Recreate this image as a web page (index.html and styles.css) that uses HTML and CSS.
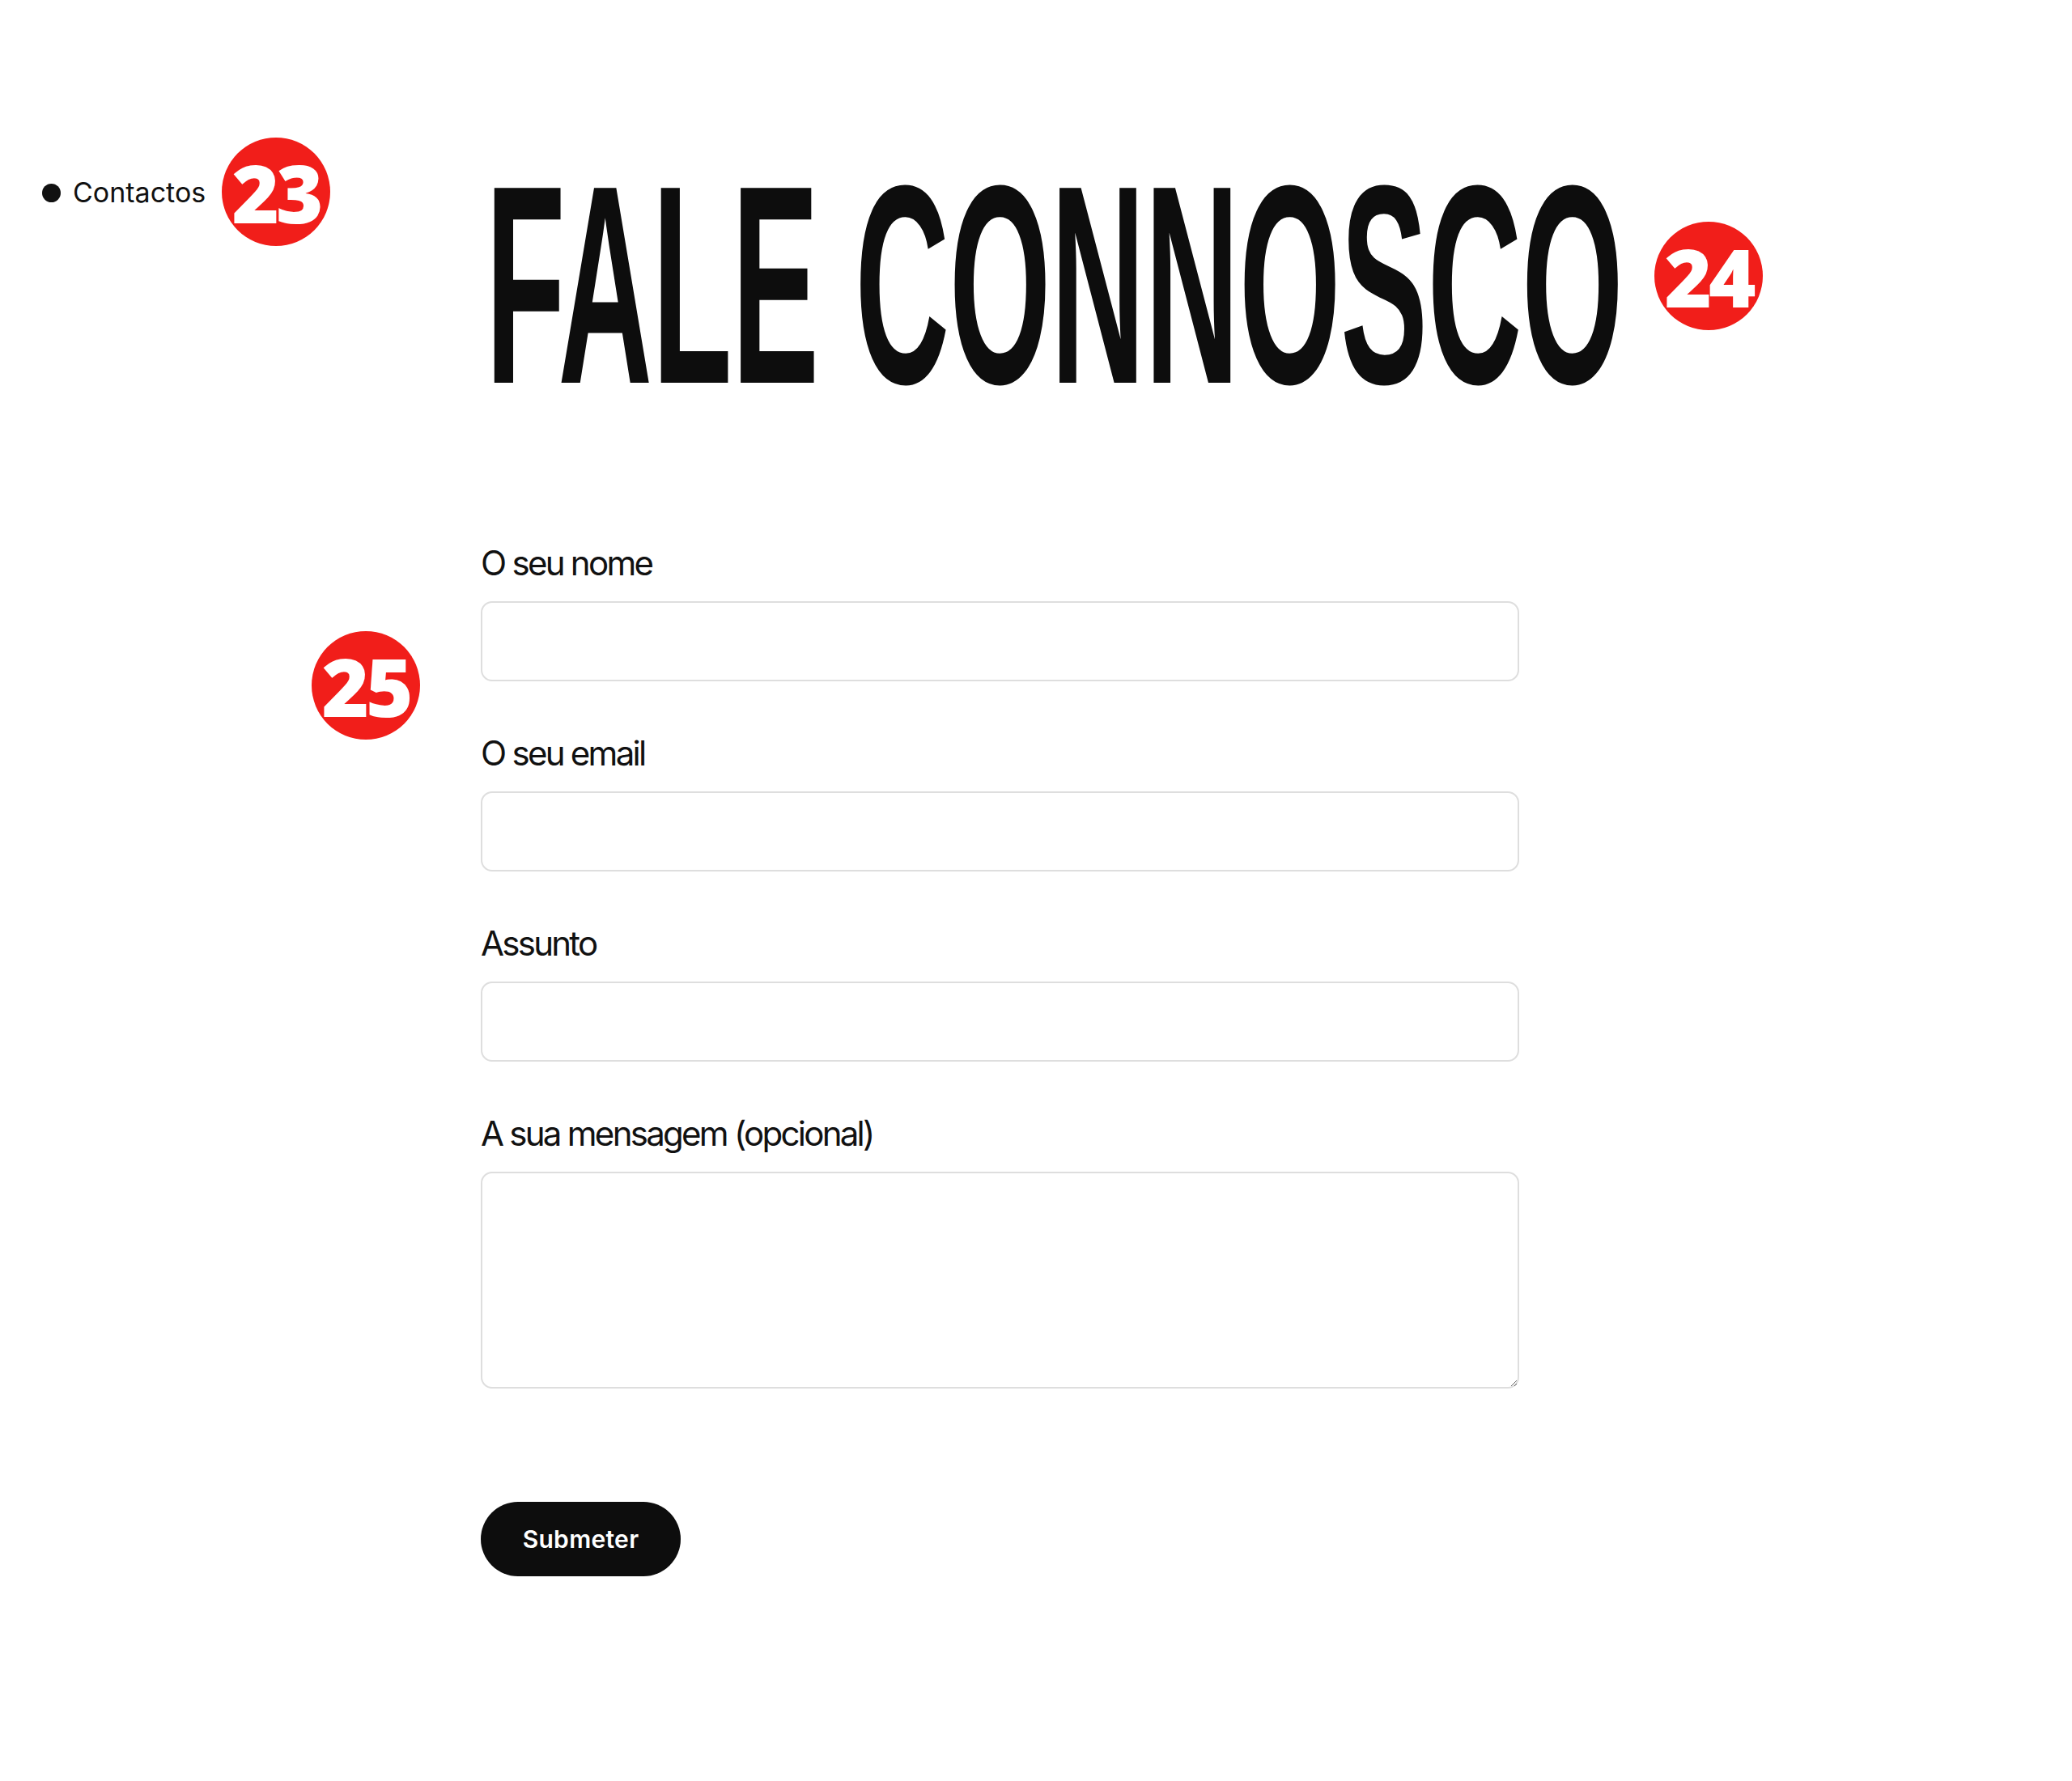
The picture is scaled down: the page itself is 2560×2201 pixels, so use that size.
FILE: index.html
```html
<!DOCTYPE html>
<html lang="pt">
<head>
<meta charset="utf-8">
<title>Fale connosco</title>
<link rel="stylesheet" href="styles.css">
</head>
<body>
<main class="page">
  <aside class="side">
    <span class="dot"></span>
    <span class="side-label">Contactos</span>
  </aside>
  <section class="content">
    <h1 class="title"><span class="title-text">FALE CONNOSCO</span></h1>
    <form class="form">
      <div class="field">
        <label class="label" for="nome">O seu nome</label>
        <input class="input" id="nome" type="text">
      </div>
      <div class="field">
        <label class="label" for="email">O seu email</label>
        <input class="input" id="email" type="email">
      </div>
      <div class="field">
        <label class="label" for="assunto">Assunto</label>
        <input class="input" id="assunto" type="text">
      </div>
      <div class="field">
        <label class="label" for="mensagem">A sua mensagem (opcional)</label>
        <textarea class="input textarea" id="mensagem"></textarea>
      </div>
      <button class="submit" type="button">Submeter</button>
    </form>
  </section>
  <span class="badge badge-23">23</span>
  <span class="badge badge-24">24</span>
  <span class="badge badge-25">25</span>
</main>
</body>
</html>
```
FILE: styles.css
```css
html, body {
  margin: 0;
  padding: 0;
  background: #ffffff;
}

.page {
  position: relative;
  box-sizing: border-box;
  min-height: 2201px;
  padding-top: 184px;
  display: grid;
  grid-template-columns: 594px 1283px;
  align-items: start;
  font-family: Inter, "Noto Sans", sans-serif;
  color: #111111;
}

.side {
  display: flex;
  align-items: center;
  gap: 15px;
  height: 50px;
  margin-top: 29px;
  padding-left: 52px;
}

.dot {
  width: 23px;
  height: 23px;
  border-radius: 50%;
  background: #111111;
  flex: none;
}

.side-label {
  font-size: 34px;
  line-height: 50px;
  letter-spacing: 0;
  color: #111111;
}

.content {
  display: flex;
  flex-direction: column;
  min-width: 0;
}

.title {
  margin: 0;
  height: 346px;
  font-family: "Liberation Sans", Arial, sans-serif;
  font-weight: 700;
  font-size: 350px;
  line-height: 346px;
  white-space: nowrap;
  color: #0d0d0d;
}

.title-text {
  display: inline-block;
  margin-right: -1700px;
  transform: translate(6px, -5px) scaleX(0.4604);
  transform-origin: left center;
}

.form {
  margin-top: 140px;
  display: flex;
  flex-direction: column;
  gap: 63px;
}

.field {
  display: flex;
  flex-direction: column;
  gap: 21px;
}

.label {
  font-size: 42px;
  line-height: 52px;
  letter-spacing: -0.065em;
  color: #111111;
}

.input {
  box-sizing: border-box;
  width: 1283px;
  height: 99px;
  margin: 0;
  border: 2px solid #dedede;
  border-radius: 14px;
  background: #ffffff;
  font: inherit;
  font-size: 32px;
  padding: 0 24px;
  outline: none;
}

.textarea {
  height: 268px;
  padding: 20px 24px;
  resize: vertical;
}

.submit {
  margin-top: 77px;
  width: 247px;
  height: 92px;
  border: none;
  border-radius: 46px;
  background: #0d0d0d;
  color: #ffffff;
  font-family: Inter, "Noto Sans", sans-serif;
  font-weight: 600;
  font-size: 30px;
  letter-spacing: 0.01em;
  cursor: pointer;
  padding: 0;
}

.badge {
  position: absolute;
  width: 134px;
  height: 134px;
  border-radius: 50%;
  background: #f11e1a;
  color: #ffffff;
  display: flex;
  align-items: center;
  justify-content: center;
  font-family: "Open Sans", "Liberation Sans", sans-serif;
  font-weight: 800;
  font-size: 100px;
  line-height: 1;
  letter-spacing: -4px;
}

.badge-23 { left: 274px; top: 170px; }
.badge-24 { left: 2044px; top: 274px; }
.badge-25 { left: 385px; top: 780px; }
```
